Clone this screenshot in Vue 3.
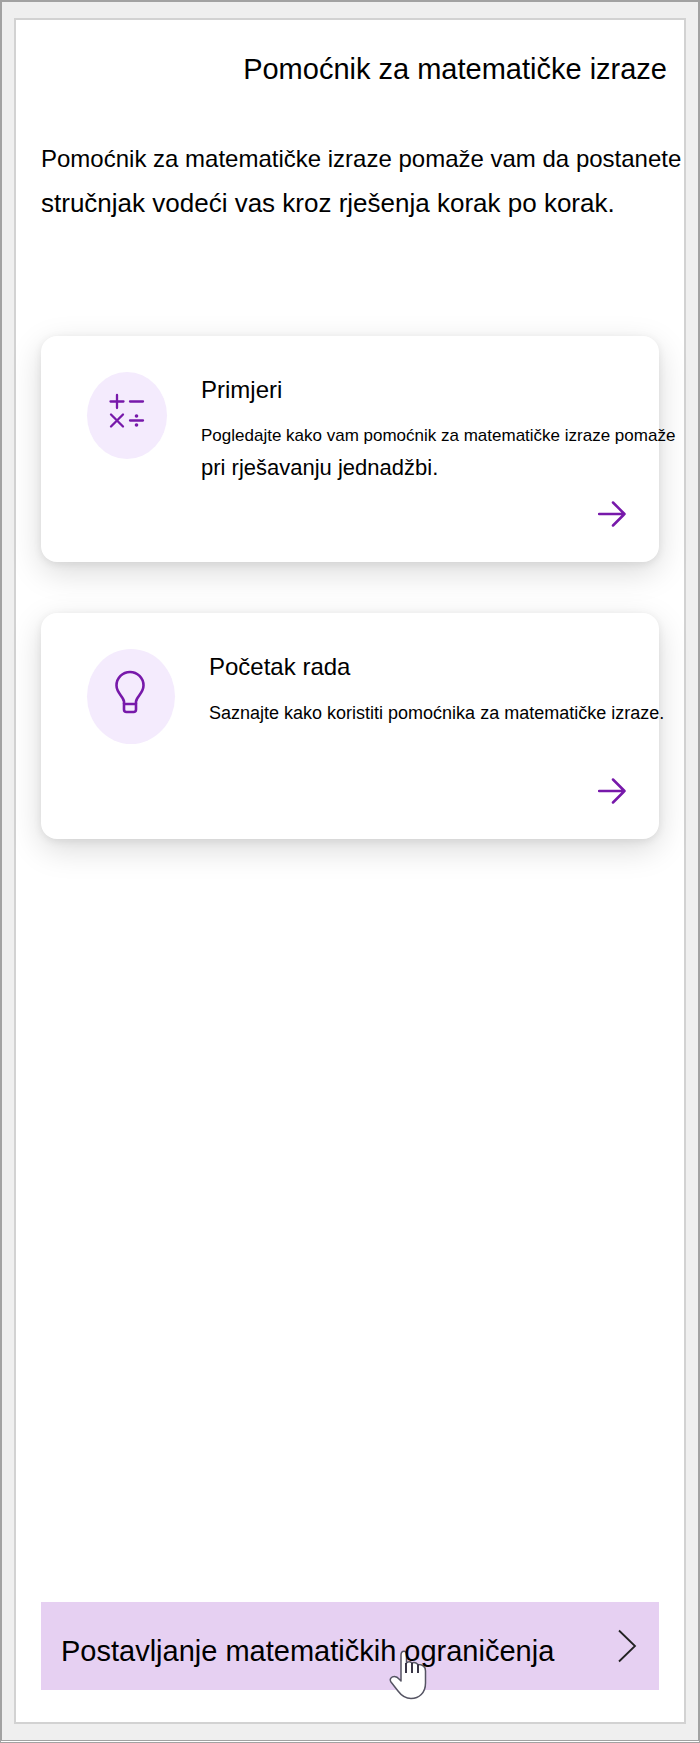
<script setup>
const cards = [
  {
    id: 'examples',
    title: 'Primjeri',
    icon: 'math',
    lines: [
      { text: 'Pogledajte kako vam pomoćnik za matematičke izraze pomaže', size: 'small' },
      { text: 'pri rješavanju jednadžbi.', size: 'large' },
    ],
  },
  {
    id: 'start',
    title: 'Početak rada',
    icon: 'bulb',
    lines: [{ text: 'Saznajte kako koristiti pomoćnika za matematičke izraze.', size: 'medium' }],
  },
]
</script>

<template>
  <div class="window">
    <main class="panel">
      <h1 class="title">Pomoćnik za matematičke izraze</h1>
      <p class="intro">
        <span class="intro-first">Pomoćnik za matematičke izraze pomaže vam da postanete </span>
        <span class="intro-second">stručnjak vodeći vas kroz rješenja korak po korak.</span>
      </p>

      <nav class="cards">
        <a v-for="card in cards" :key="card.id" class="card" :href="'#' + card.id">
          <div class="card-body">
            <div class="badge" :class="card.icon">
              <svg v-if="card.icon === 'math'" width="36" height="36" viewBox="0 0 36 36" aria-hidden="true">
                <g fill="none" stroke="#7719aa" stroke-width="2.300" stroke-linecap="round">
                  <path d="M1.500 8.500H14.500M8 2V15M21 8.500H34M2 21.500L14 33.500M14 21.500L2 33.500M21 27.500H34" />
                </g>
                <circle cx="27.500" cy="23" r="1.800" fill="#7719aa" />
                <circle cx="27.500" cy="32" r="1.800" fill="#7719aa" />
              </svg>
              <svg v-else width="32" height="44" viewBox="0 0 32 44" aria-hidden="true">
                <g fill="none" stroke="#7719aa" stroke-width="2.600" stroke-linejoin="round">
                  <path d="M10 34V31.500C9.500 26.500 2.500 23 2.500 15.500A13.500 13.500 0 0 1 29.500 15.500C29.500 23 22.500 26.500 22 31.500V34" />
                  <path d="M10 34H22V39.500Q22 42 19.500 42H12.500Q10 42 10 39.500Z" />
                </g>
              </svg>
            </div>
            <div class="card-text">
              <h2>{{ card.title }}</h2>
              <p>
                <span v-for="line in card.lines" :key="line.text" :class="line.size">{{ line.text }}</span>
              </p>
            </div>
          </div>
          <svg class="arrow" width="28" height="26" viewBox="0 0 28 26" aria-hidden="true">
            <path d="M1 13H26.500M15 1.500L26.500 13L15 24.500" fill="none" stroke="#7719aa" stroke-width="2.500" stroke-linecap="round" stroke-linejoin="round" />
          </svg>
        </a>
      </nav>

      <button class="settings" type="button">
        <span class="settings-label">Postavljanje matematičkih ograničenja</span>
        <svg class="chevron" width="20" height="34" viewBox="0 0 20 34" aria-hidden="true">
          <path d="M2 1.500L18 17L2 32.500" fill="none" stroke="#222" stroke-width="1.800" />
        </svg>
        <svg class="pointer" width="38" height="50" viewBox="0 0 38 50" aria-hidden="true">
          <path d="M12 29V5Q12 1.200 15 1.200Q17.500 1.200 17.500 5V13Q20 10.500 23 13Q26 11.500 29 14.500Q36.500 14.500 36.500 21V33C36.500 43 30 48.500 22 48.500C16 48.500 12 45 9 41L2 32C0 29 2.500 26.500 5.500 26.500C8.500 26.500 10 29 12 31Z" fill="#fff" stroke="#555463" stroke-width="1.500" stroke-linejoin="round" />
          <path d="M17 13V23M23 13V23M29 14.500V23" fill="none" stroke="#252133" stroke-width="1.800" />
        </svg>
      </button>
    </main>
  </div>
</template>

<style>
body {
  margin: 0;
}
</style>

<style scoped>
.window {
  box-sizing: border-box;
  display: flex;
  min-height: 100vh;
  padding: 16px 12px;
  border: 2px solid #a2a2a2;
  border-bottom: 3px double #a2a2a2;
  background: #efefef;
  background-clip: padding-box;
  color: #000;
  font-family: "Liberation Sans", Arial, sans-serif;
}

.panel {
  display: flex;
  flex: 1;
  flex-direction: column;
  min-width: 0;
  padding: 33px 25px 32px;
  border: 2px solid #d2d2d2;
  background: #fff;
}

h1,
h2,
p {
  margin: 0;
  font-weight: 400;
}

.title {
  margin-right: -8px;
  font-size: 29px;
  line-height: 32px;
  text-align: right;
}

.intro {
  margin-top: 52px;
  line-height: 44px;
  white-space: nowrap;
}

.intro span {
  display: block;
}

.intro-first {
  font-size: 24px;
}

.intro-second {
  font-size: 26px;
}

.cards {
  display: flex;
  flex-direction: column;
  gap: 51px;
  margin-top: 111px;
}

.card {
  box-sizing: border-box;
  display: flex;
  flex-direction: column;
  justify-content: space-between;
  min-height: 226px;
  padding: 36px 33px 35px 46px;
  border-radius: 16px;
  background: #fff;
  box-shadow: 0 10px 32px rgba(0, 0, 0, 0.15), 0 2px 8px rgba(0, 0, 0, 0.08);
  color: inherit;
  text-decoration: none;
}

.card-body {
  display: flex;
  align-items: flex-start;
  gap: 34px;
  height: 96px;
}

.badge {
  box-sizing: border-box;
  display: flex;
  flex-shrink: 0;
  justify-content: center;
  border-radius: 50%;
  background: #f4ebfd;
}

.badge.math {
  width: 80px;
  height: 87px;
  padding-top: 21px;
}

.badge.bulb {
  width: 88px;
  height: 95px;
  padding: 21px 3px 0 0;
}

.card-text {
  white-space: nowrap;
}

.card-text h2 {
  font-size: 24px;
  line-height: 36px;
}

.card-text p {
  margin-top: 12px;
  line-height: 32px;
}

.card-text span {
  display: block;
}

.small {
  font-size: 17px;
}

.medium {
  font-size: 18px;
}

.large {
  font-size: 22px;
}

.arrow {
  align-self: flex-end;
}

.settings {
  position: relative;
  display: flex;
  align-items: center;
  justify-content: space-between;
  height: 88px;
  margin-top: auto;
  padding: 0 22px 0 20px;
  border: 0;
  background: #e6d0f2;
  color: inherit;
  font-family: inherit;
  font-size: 29px;
  line-height: 32px;
  text-align: left;
}

.settings-label {
  z-index: 1;
  padding-top: 10px;
}

.pointer {
  position: absolute;
  top: 48px;
  left: 348px;
}
</style>
